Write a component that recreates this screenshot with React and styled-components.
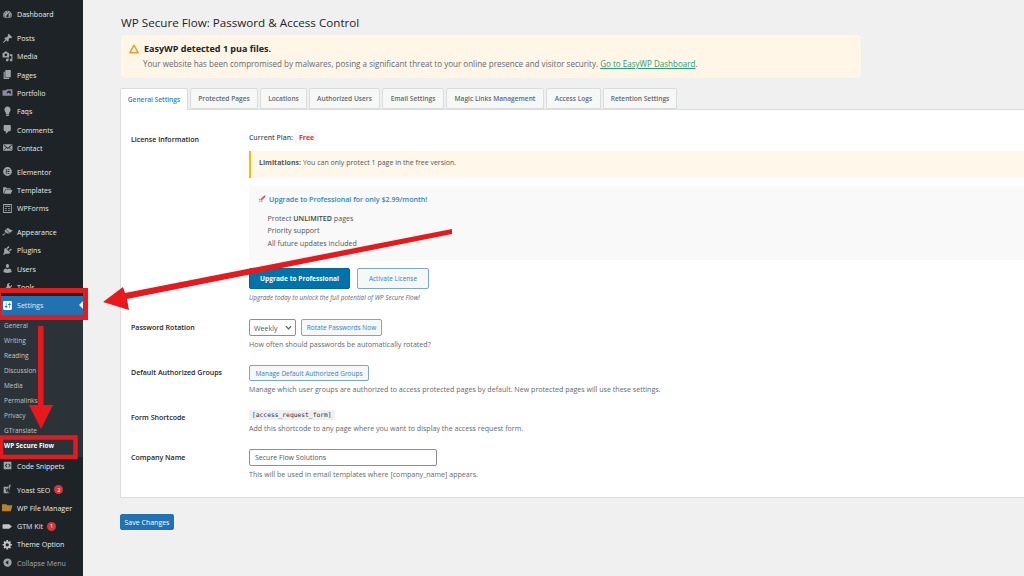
import React from 'react';
import styled, { createGlobalStyle } from 'styled-components';

const Global = createGlobalStyle`
  html, body { margin: 0; padding: 0; background: #f0f0f0; overflow: hidden; }
  body { font-family: "Open Sans", sans-serif; width: 1024px; height: 576px; }
  * { box-sizing: border-box; }
`;

const Page = styled.div`position: relative; display: flex; width: 1024px; height: 576px; overflow: hidden;`;
const Sidebar = styled.nav`width: 83px; flex: none; background: #1d2327; padding-top: 5px; display: flex; flex-direction: column;`;
const Group = styled.div`margin-bottom: 5.6px; display: flex; flex-direction: column;`;
const Item = styled.div`
  height: 18.3px; display: flex; align-items: center; gap: 4px; padding-left: 2px; position: relative;
  color: ${p => p.$dim ? '#a7aaad' : '#e8eaeb'}; font-size: 7.1px; background: ${p => p.$active ? '#2271b1' : 'transparent'};
  white-space: nowrap;
`;
const Glyph = styled.svg`width: 11px; height: 11px; flex: none; fill: ${p => p.$color || '#a0a5aa'}; fill-rule: evenodd;`;
const Notch = styled.span`position: absolute; right: 0; top: 5px; width: 0; height: 0; border: 4px solid transparent; border-right-color: #f0f0f0; border-left: 0;`;
const Submenu = styled.div`background: #2c3338; padding: 3px 0 4px; display: flex; flex-direction: column;`;
const SubItem = styled.div`height: 15px; padding-left: 4px; display: flex; align-items: center; font-size: ${p => p.$on ? 6.4 : 6.5}px; color: ${p => p.$on ? '#fff' : '#c3c4c7'}; font-weight: ${p => p.$on ? 700 : 400};`;
const Badge = styled.span`width: 9px; height: 9px; border-radius: 50%; background: #d63638; color: #fff; font-size: 5.5px; display: inline-flex; align-items: center; justify-content: center; margin-left: 0;`;

const Main = styled.main`flex: 1; min-width: 0; padding: 14px 0 0 37px;`;
const Title = styled.h1`margin: 0 0 3px 1px; font-size: 11.65px; line-height: 18px; font-weight: 400; color: #1d2327;`;
const Notice = styled.div`width: 740px; height: 42.5px; margin-left: 1px; background: #fff6e8; border-radius: 4px; padding: 7px 10px 0 8px; margin-bottom: 10.5px;`;
const NoticeHead = styled.div`display: flex; align-items: center; gap: 5px; font-size: 9px; font-weight: 700; color: #1d2327; line-height: 13px;`;
const NoticeText = styled.div`font-size: 8.05px; color: #646970; margin: 2px 0 0 14px; line-height: 13px;
  a { color: #2a9d74; text-decoration: underline; }`;
const Tabs = styled.div`display: flex; gap: 2px; height: 22px; margin-bottom: -1px; position: relative; z-index: 1;`;
const Tab = styled.div`
  height: ${p => p.$active ? 22 : 21}px; width: ${p => p.$w}px; display: flex; align-items: center; justify-content: center;
  font-size: 6.6px; font-weight: 600; color: ${p => p.$active ? '#2b87b8' : '#646970'};
  background: ${p => p.$active ? '#fff' : '#f6f7f7'}; border: 1px solid #dcdcde; border-bottom: ${p => p.$active ? 'none' : '1px solid #dcdcde'};
  border-radius: 2px 2px 0 0; white-space: nowrap;
`;
const Panel = styled.section`width: 930px; height: 389px; background: #fff; border: 1px solid #dcdcde; padding: 22px 0 0 10px;`;
const Row = styled.div`display: grid; grid-template-columns: 118px 1fr; margin-bottom: ${p => p.$mb || 0}px;`;
const Label = styled.div`font-size: 7.05px; font-weight: 600; color: #1d2327; line-height: 11px; padding-top: ${p => p.$pt || 0}px;`;
const Plan = styled.div`font-size: 6.9px; font-weight: 600; color: #50575e; display: flex; align-items: center; gap: 2px; height: 11px;`;
const Free = styled.span`color: #d63638; background: #f6f7f7; line-height: 12px; padding: 0 4px; border-radius: 2px; font-weight: 700;`;
const Limit = styled.div`margin-top: 8px; height: 27px; background: #fff7ea; border-left: 2px solid #ffb900; padding: 0 0 4px 8px; display: flex; align-items: center; font-size: 7px; color: #50575e; b { font-weight: 700; margin-right: 2px; }`;
const Upgrade = styled.div`margin-top: 8px; height: 74px; background: #f9f9f9; border-radius: 2px; padding: 7.5px 0 0 9px;`;
const UpHead = styled.div`font-size: 7.1px; font-weight: 600; color: #2b87b8; display: flex; align-items: center; gap: 3px; line-height: 11px;`;
const Rocket = styled.svg`width: 8px; height: 8px; flex: none;`;
const List = styled.ul`list-style: none; margin: 7px 0 0; padding: 0 0 0 9.6px; font-size: 7.1px; color: #50575e; li { height: 12.8px; line-height: 12.8px; } b { font-weight: 600; color: #3c434a; }`;
const Actions = styled.div`display: flex; gap: 7px; margin-top: 8px;`;
const Primary = styled.button`font: inherit; height: 21px; width: 101px; background: #0073aa; color: #fff; border: 1px solid #006799; border-radius: 2px; font-size: 6.6px; font-weight: 700; padding: 0;`;
const Secondary = styled.button`font: inherit; height: ${p => p.$h || 16}px; width: ${p => p.$w}px; background: #f6f7f7; color: #3582c4; border: 1px solid #7aa7cf; border-radius: 2px; font-size: 6.5px; padding: 0; white-space: nowrap; display: block;`;
const Tip = styled.div`margin-top: 4px; font-size: 6.35px; font-style: italic; color: #646970; line-height: 9px;`;
const Controls = styled.div`display: flex; gap: 5px; align-items: center;`;
const Select = styled.div`width: 47px; height: 17px; border: 1px solid #8c8f94; border-radius: 2px; background: #fff; font-size: 7.1px; color: #50575e; display: flex; align-items: center; justify-content: space-between; padding: 0 3px 0 4px;`;
const Chevron = styled.svg`width: 7px; height: 7px; fill: none; stroke: #50575e; stroke-width: 1.4;`;
const Warn = styled.svg`width: 10px; height: 10px; fill: none; stroke: #e0a030; stroke-width: 1.4; flex: none;`;
const Desc = styled.div`font-size: 7.1px; color: #646970; margin-top: 2.5px; line-height: 11px;`;
const CodeTag = styled.code`display: inline-block; font-family: "DejaVu Sans Mono", monospace; font-size: 6.3px; background: #f0f0f1; padding: 0 3px; height: 10px; line-height: 10px; color: #2c3338; vertical-align: top;`;
const CodeLine = styled.div`height: 10px; display: flex;`;
const TextInput = styled.div`width: 188px; height: 17px; border: 1px solid #8c8f94; border-radius: 2px; font-size: 7px; color: #50575e; display: flex; align-items: center; padding-left: 5px;`;
const Save = styled.button`font: inherit; display: block; margin-top: 16px; width: 54px; height: 16px; background: #2271b1; color: #fff; border: 1px solid #2271b1; border-radius: 2px; font-size: 7px; padding: 0;`;
const Overlay = styled.svg`position: absolute; left: 0; top: 0; pointer-events: none;`;

const P = {
  dashboard: 'M3.76 16h12.48c1.1-1.37 1.76-3.11 1.76-5 0-4.42-3.58-8-8-8s-8 3.58-8 8c0 1.89.66 3.63 1.76 5zM10 4c.55 0 1 .45 1 1s-.45 1-1 1-1-.45-1-1 .45-1 1-1zM6 6c.55 0 1 .45 1 1s-.45 1-1 1-1-.45-1-1 .45-1 1-1zm8 0c.55 0 1 .45 1 1s-.45 1-1 1-1-.45-1-1 .45-1 1-1zm-5.37 5.55L12 7v6c0 1.1-.9 2-2 2s-2-.9-2-2c0-.57.24-1.08.63-1.45zM4 10c.55 0 1 .45 1 1s-.45 1-1 1-1-.45-1-1 .45-1 1-1zm12 0c.55 0 1 .45 1 1s-.45 1-1 1-1-.45-1-1 .45-1 1-1zm-11 5c-.55 0-1-.45-1-1s.45-1 1-1 1 .45 1 1-.45 1-1 1zm10 0c-.55 0-1-.45-1-1s.45-1 1-1 1 .45 1 1-.45 1-1 1z',
  post: 'M10.44 3.02l1.82-1.82 6.36 6.35-1.83 1.82c-1.05-.68-2.48-.57-3.41.36l-.75.75c-.92.93-1.04 2.35-.35 3.41l-1.83 1.82-2.41-2.41-2.8 2.79c-.42.42-3.38 2.71-3.8 2.29s1.86-3.39 2.28-3.81l2.79-2.79L4.1 9.36l1.83-1.82c1.05.69 2.48.57 3.4-.36l.75-.75c.93-.92 1.05-2.35.36-3.41z',
  media: 'M13 11V4c0-.55-.45-1-1-1h-1.67L9 1H5L3.67 3H2c-.55 0-1 .45-1 1v7c0 .55.45 1 1 1h10c.55 0 1-.45 1-1zM7 4.5c1.38 0 2.5 1.12 2.5 2.5S8.38 9.5 7 9.5 4.5 8.38 4.5 7 5.62 4.5 7 4.5zM14 6h5v10.5c0 1.38-1.12 2.5-2.5 2.5S14 17.88 14 16.5s1.12-2.5 2.5-2.5c.17 0 .34.02.5.05V9h-3V6zm-4 8.05V13h2v3.5c0 1.38-1.12 2.5-2.5 2.5S7 17.88 7 16.5 8.12 14 9.5 14c.17 0 .34.02.5.05z',
  page: 'M6 15V2h10v13H6zm-1 1h8v2H3V5h2v11z',
  portfolio: 'M1 6h6l2-2h10v12H1z M11 7l-3 4 2 1 2-2 4 3V7z',
  faq: 'M10 1c3.11 0 5.63 2.52 5.63 5.62 0 1.84-2.03 4.58-2.03 4.58-.33.44-.6 1.25-.6 1.8v1c0 .55-.45 1-1 1H8c-.55 0-1-.45-1-1v-1c0-.55-.27-1.36-.6-1.8 0 0-2.02-2.74-2.02-4.58C4.38 3.52 6.89 1 10 1zM7 16.87V16h6v.87c0 .62-.13 1.13-1.75 1.13H8.75C7.13 18 7 17.49 7 16.87z',
  comment: 'M5 2h9c1.1 0 2 .9 2 2v7c0 1.1-.9 2-2 2h-2l-5 5v-5H5c-1.1 0-2-.9-2-2V4c0-1.1.9-2 2-2z',
  mail: 'M19 14.5v-9c0-.83-.67-1.5-1.5-1.5H3.49c-.83 0-1.5.67-1.5 1.5v9c0 .83.67 1.5 1.5 1.5H17.5c.83 0 1.5-.67 1.5-1.5zm-1.31-9.11c.33.33.15.67-.03.84L13.6 9.95l3.9 4.06c.12.14.2.36.06.51-.13.16-.43.15-.56.05l-4.37-3.73-2.14 1.95-2.13-1.95-4.37 3.73c-.13.1-.43.11-.56-.05-.14-.15-.06-.37.06-.51l3.9-4.06-4.06-3.72c-.18-.17-.36-.51-.03-.84s.67-.17.95.07l6.24 5.04 6.25-5.04c.28-.24.62-.4.95-.07z',
  elementor: 'M10 2a8 8 0 1 0 0 16 8 8 0 0 0 0-16z M7 6h1.5v8H7z M10 6h3.5v1.5H10z M10 9.25h3.5v1.5H10z M10 12.5h3.5V14H10z',
  templates: 'M2 5c0-.6.4-1 1-1h4l2 2h6c.6 0 1 .4 1 1v1H6L3 15H2z M6.7 9H19l-3 7H3.6z',
  forms: 'M2 2h16v16H2z M3.5 3.5v13h13v-13z M5 5h10v2H5z M5 9h4v1.5H5z M11 9h4v1.5h-4z M5 12.5h4V14H5z M11 12.5h4V14h-4z',
  appearance: 'M14.48 11.06L7.41 3.99l1.5-1.5c.5-.56 2.3-.47 3.51.32 1.21.8 1.43 1.28 2.91 2.1 1.18.64 2.45 1.26 4.45.85zm-.71.71L6.7 4.7 4.93 6.47c-.39.39-.39 1.02 0 1.41l1.06 1.06c.39.39.39 1.03 0 1.42-.6.6-1.43 1.11-2.21 1.69-.35.26-.7.53-1.01.84C1.43 13.23.4 14.75 1.1 15.45c.71.7 2.22-.33 3.56-1.67.31-.31.58-.66.84-1.01.58-.78 1.09-1.61 1.69-2.21.39-.39 1.02-.39 1.41 0l1.06 1.06c.39.39 1.02.39 1.41 0z',
  plugin: 'M13.11 4.36L9.87 7.6 8 5.73l3.24-3.24c.35-.34 1.05-.2 1.56.32.52.51.66 1.21.31 1.55zm-8 1.77l.91-1.12 9.01 9.01-1.19.84c-.71.71-2.63 1.16-3.82 1.16H6.14L4.9 17.26c-.59.59-1.54.59-2.12 0-.59-.58-.59-1.53 0-2.12l1.24-1.24v-3.88c0-1.13.4-3.19 1.09-3.89zm7.26 3.97l3.24-3.24c.34-.35 1.04-.21 1.55.31.52.51.66 1.21.31 1.55l-3.24 3.25z',
  users: 'M10 9.25c-2.27 0-2.73-3.44-2.73-3.44C7 4.02 7.82 2 9.97 2c2.16 0 2.98 2.02 2.71 3.81 0 0-.41 3.44-2.68 3.44zm0 2.57L12.72 10c2.39 0 4.52 2.33 4.52 4.53v2.49s-3.65 1.13-7.24 1.13c-3.65 0-7.24-1.13-7.24-1.13v-2.49c0-2.25 1.94-4.48 4.47-4.48z',
  tools: 'M16.68 9.77c-1.34 1.34-3.3 1.67-4.95.99l-5.41 6.52c-.99.99-2.59.99-3.58 0s-.99-2.59 0-3.57l6.52-5.42c-.68-1.65-.35-3.61.99-4.95 1.28-1.28 3.12-1.62 4.72-1.06l-2.89 2.89 2.82 2.82 2.86-2.87c.53 1.58.18 3.39-1.08 4.65zM3.81 16.21c.4.39 1.04.39 1.43 0 .4-.4.4-1.04 0-1.43-.39-.4-1.03-.4-1.43 0-.39.39-.39 1.03 0 1.43z',
  settings: 'M18 16V4c0-1.1-.9-2-2-2H4c-1.1 0-2 .9-2 2v12c0 1.1.9 2 2 2h12c1.1 0 2-.9 2-2zM8 11h1c.55 0 1 .45 1 1s-.45 1-1 1H8v1.5c0 .28-.22.5-.5.5s-.5-.22-.5-.5V13H6c-.55 0-1-.45-1-1s.45-1 1-1h1V5.5c0-.28.22-.5.5-.5s.5.22.5.5V11zm5-2h-1c-.55 0-1-.45-1-1s.45-1 1-1h1V5.5c0-.28.22-.5.5-.5s.5.22.5.5V7h1c.55 0 1 .45 1 1s-.45 1-1 1h-1v5.5c0 .28-.22.5-.5.5s-.5-.22-.5-.5V9z',
  snippets: 'M3 3h14v14H3z M8.6 6.5L5.2 10l3.4 3.5 1-1L7.2 10l2.4-2.5z M11.4 7.5l2.4 2.5-2.4 2.5 1 1 3.4-3.5-3.4-3.5z',
  yoast: 'M3 5h10v12H3z M5.4 7.5h1.9l1.4 3.6 1.5-3.6h1.9l-3.1 7H7l.8-1.7z M13 1.5h3L12 16h-2z',
  folder: 'M0 4h8l2 2h9l-3 11H0z',
  tag: 'M2 6h11l5 4-5 4H2c-.6 0-1-.4-1-1V7c0-.6.4-1 1-1z',
  gear: 'M18 12h-2.18c-.17.7-.44 1.35-.81 1.93l1.54 1.54-2.1 2.1-1.54-1.54c-.58.36-1.23.63-1.91.79V19H8v-2.18c-.68-.16-1.33-.43-1.91-.79l-1.54 1.54-2.12-2.12 1.54-1.54c-.36-.58-.63-1.23-.79-1.91H1V9.03h2.17c.16-.7.44-1.35.8-1.94L2.43 5.55l2.1-2.1 1.54 1.54c.58-.37 1.24-.64 1.93-.81V2h3v2.18c.68.16 1.33.43 1.91.79l1.54-1.54 2.12 2.12-1.54 1.54c.36.59.64 1.24.8 1.94H18V12zm-8.5 1.5c1.66 0 3-1.34 3-3s-1.34-3-3-3-3 1.34-3 3 1.34 3 3 3z',
  collapse: 'M10 2.5a7.5 7.5 0 1 0 0 15 7.5 7.5 0 0 0 0-15z M11.5 6v8L6 10z',
};
const Icon = ({ d, color }) => <Glyph viewBox="0 0 20 20" $color={color}><path d={d} /></Glyph>;

const groups = [
  [['Dashboard', P.dashboard]],
  [['Posts', P.post], ['Media', P.media], ['Pages', P.page], ['Portfolio', P.portfolio, '#8f88a0'], ['Faqs', P.faq], ['Comments', P.comment], ['Contact', P.mail]],
  [['Elementor', P.elementor], ['Templates', P.templates], ['WPForms', P.forms]],
  [['Appearance', P.appearance], ['Plugins', P.plugin], ['Users', P.users], ['Tools', P.tools]],
];
const subs = ['General', 'Writing', 'Reading', 'Discussion', 'Media', 'Permalinks', 'Privacy', 'GTranslate'];
const tabs = [['General Settings', 68], ['Protected Pages', 68], ['Locations', 47], ['Authorized Users', 71], ['Email Settings', 62], ['Magic Links Management', 98], ['Access Logs', 55], ['Retention Settings', 74]];

export default function App() {
  return (
    <Page>
      <Global />
      <Sidebar>
        {groups.map((g, i) => (
          <Group key={i}>
            {g.map(([t, d, c]) => <Item key={t}><Icon d={d} color={c} />{t}</Item>)}
            {i === 3 && (
              <>
                <Item $active><Icon d={P.settings} color="#fff" />Settings<Notch /></Item>
                <Submenu>
                  {subs.map(s => <SubItem key={s}>{s}</SubItem>)}
                  <SubItem $on>WP Secure Flow</SubItem>
                </Submenu>
                <Item><Icon d={P.snippets} />Code Snippets</Item>
              </>
            )}
          </Group>
        ))}
        <Group>
          <Item><Icon d={P.yoast} />Yoast SEO <Badge>2</Badge></Item>
          <Item><Icon d={P.folder} color="#b9812c" />WP File Manager</Item>
          <Item><Icon d={P.tag} color="#c3c4c7" />GTM Kit <Badge>1</Badge></Item>
          <Item><Icon d={P.gear} color="#c3c4c7" />Theme Option</Item>
          <Item $dim><Icon d={P.collapse} />Collapse Menu</Item>
        </Group>
      </Sidebar>
      <Main>
        <Title>WP Secure Flow: Password &amp; Access Control</Title>
        <Notice>
          <NoticeHead>
            <Warn viewBox="0 0 10 10"><path d="M5 1.2 L9.2 8.8 H.8 Z" strokeLinejoin="round" /></Warn>
            EasyWP detected 1 pua files.
          </NoticeHead>
          <NoticeText>Your website has been compromised by malwares, posing a significant threat to your online presence and visitor security. <a>Go to EasyWP Dashboard</a>.</NoticeText>
        </Notice>
        <Tabs>{tabs.map(([t, w], i) => <Tab key={t} $w={w} $active={i === 0}>{t}</Tab>)}</Tabs>
        <Panel>
          <Row $mb={17}>
            <Label $pt={2}>License Information</Label>
            <div>
              <Plan>Current Plan: <Free>Free</Free></Plan>
              <Limit><b>Limitations:</b> You can only protect 1 page in the free version.</Limit>
              <Upgrade>
                <UpHead>
                  <Rocket viewBox="0 0 10 10">
                    <path d="M3 5.5 L7.5 1 L9.5 .5 L9 2.5 L4.5 7 Z" fill="#d6487e" />
                    <path d="M3 5.5 L.8 5.8 L2.5 4 Z M4.5 7 L4.2 9.2 L6 7.5 Z" fill="#c0392b" />
                    <path d="M2.5 6.5 L.5 9.5 L3.5 7.5 Z" fill="#e8734a" />
                  </Rocket>
                  Upgrade to Professional for only $2.99/month!
                </UpHead>
                <List>
                  <li>Protect <b>UNLIMITED</b> pages</li>
                  <li>Priority support</li>
                  <li>All future updates included</li>
                </List>
              </Upgrade>
              <Actions><Primary>Upgrade to Professional</Primary><Secondary $h={21} $w={72}>Activate License</Secondary></Actions>
              <Tip>Upgrade today to unlock the full potential of WP Secure Flow!</Tip>
            </div>
          </Row>
          <Row $mb={15.5}>
            <Label $pt={2.5}>Password Rotation</Label>
            <div>
              <Controls>
                <Select>Weekly<Chevron viewBox="0 0 8 8"><path d="M1 2.5 L4 5.5 L7 2.5" /></Chevron></Select>
                <Secondary $h={17} $w={81}>Rotate Passwords Now</Secondary>
              </Controls>
              <Desc>How often should passwords be automatically rotated?</Desc>
            </div>
          </Row>
          <Row $mb={15.5}>
            <Label $pt={2}>Default Authorized Groups</Label>
            <div>
              <Secondary $w={120}>Manage Default Authorized Groups</Secondary>
              <Desc>Manage which user groups are authorized to access protected pages by default. New protected pages will use these settings.</Desc>
            </div>
          </Row>
          <Row $mb={15.5}>
            <Label $pt={2}>Form Shortcode</Label>
            <div>
              <CodeLine><CodeTag>[access_request_form]</CodeTag></CodeLine>
              <Desc>Add this shortcode to any page where you want to display the access request form.</Desc>
            </div>
          </Row>
          <Row>
            <Label $pt={2.5}>Company Name</Label>
            <div>
              <TextInput>Secure Flow Solutions</TextInput>
              <Desc>This will be used in email templates where [company_name] appears.</Desc>
            </div>
          </Row>
        </Panel>
        <Save>Save Changes</Save>
      </Main>
      <Overlay width="1024" height="576" viewBox="0 0 1024 576">
        <g fill="none" stroke="#e31b1f" strokeWidth="5">
          <rect x="-1.5" y="290.5" width="87" height="27" />
          <rect x="1" y="437.5" width="74.5" height="19.5" strokeWidth="4.5" />
        </g>
        <g fill="#e8191c">
          <path d="M452 229 L452 234 L127 299 L129 310 L103 302 L123 287 L125 293 Z" />
          <path d="M38 326 H43.5 V405 H53 L41 429 L29 405 H38 Z" />
        </g>
      </Overlay>
    </Page>
  );
}
